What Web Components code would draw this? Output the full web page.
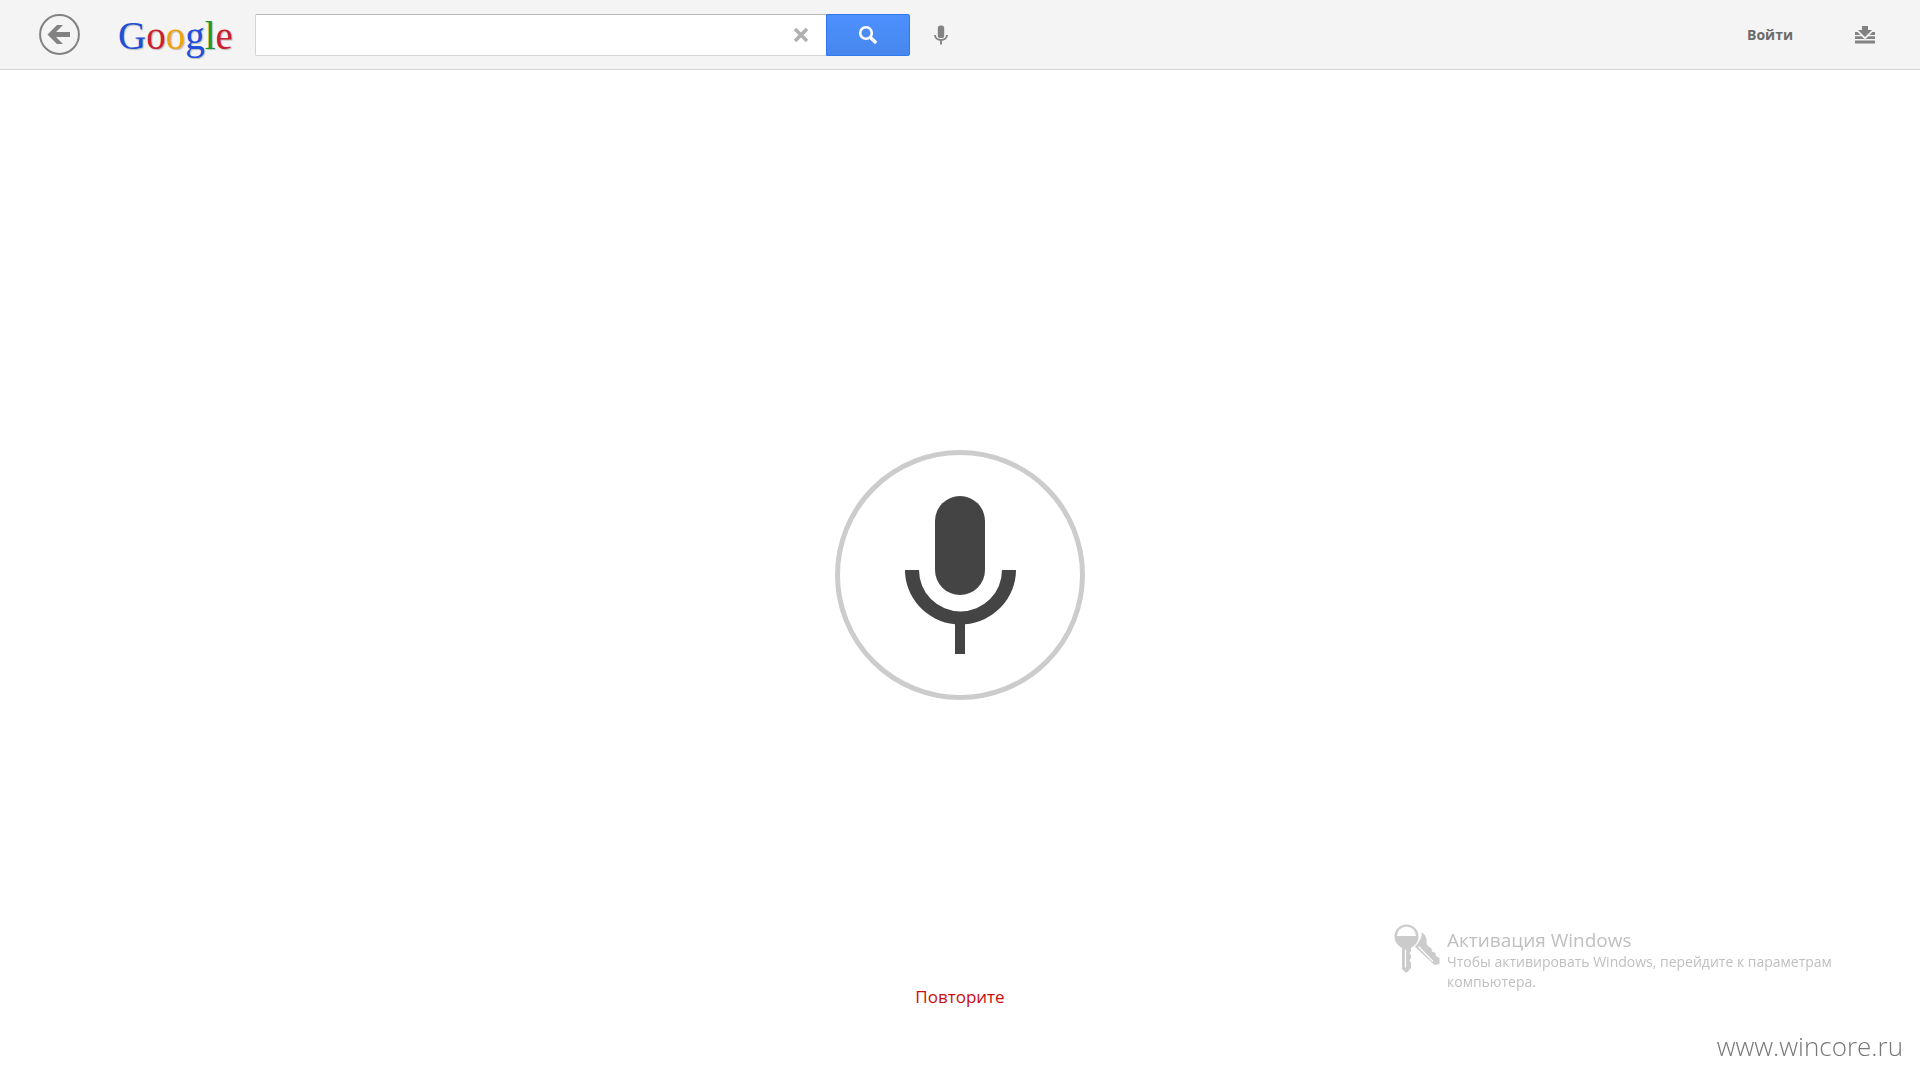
<!DOCTYPE html>
<html lang="ru">
<head>
<meta charset="utf-8">
<title>Google</title>
<style>
  html, body {
    height: 100%;
    margin: 0;
  }

  body {
    font-family: "Open Sans", "Noto Sans", sans-serif;
    background: #fff;
  }
</style>
</head>
<body>
<voice-app></voice-app>

<script>
(function () {
  function define(name, html) {
    const template = document.createElement('template')
    template.innerHTML = html
    customElements.define(name, class extends HTMLElement {
      constructor() {
        super()
        this.attachShadow({ mode: 'open' })
        this.shadowRoot.appendChild(template.content.cloneNode(true))
      }
    })
  }

  define('icon-button', `
    <style>
      :host {
        display: block;
      }

      button {
        display: block;
        padding: 0;
        border: 0;
        background: none;
        font: inherit;
        color: inherit;
        cursor: pointer;
      }
    </style>
    <button type="button"><slot></slot></button>
  `)

  define('google-logo', `
    <style>
      :host {
        display: block;
        padding-top: 2px;
        font-family: "Liberation Serif", serif;
        font-size: 39px;
        line-height: 48px;
      }

      a {
        color: #1f4fd8;
        text-decoration: none;
        text-shadow: 1px 1px 1px #bbb;
      }

      .red { color: #c9202f; }
      .yellow { color: #eba310; }
      .green { color: #1a9a2c; }
    </style>
    <a href="#">G<span class="red">o</span><span class="yellow">o</span>g<span class="green">l</span><span class="red">e</span></a>
  `)

  define('search-box', `
    <style>
      :host {
        display: flex;
        height: 42px;
        width: 655px;
      }

      .field {
        box-sizing: border-box;
        display: flex;
        flex: 1;
        align-items: center;
        padding: 0 17px 0 12px;
        border: 1px solid #d4d4d4;
        border-top-color: #b8b8b8;
        border-right: 0;
        border-radius: 2px 0 0 2px;
        background: #fff;
      }

      input {
        flex: 1;
        min-width: 0;
        border: 0;
        outline: 0;
        background: none;
        font: inherit;
        font-size: 17px;
      }

      .submit {
        display: grid;
        place-items: center;
        width: 84px;
        padding: 0;
        border: 1px solid #3079ed;
        border-radius: 0 2px 2px 0;
        background: linear-gradient(#4d90fe, #4787ed);
        cursor: pointer;
      }

      svg {
        display: block;
      }
    </style>
    <div class="field">
      <input type="text" aria-label="Поиск">
      <icon-button>
        <svg width="16" height="16" viewBox="0 0 16 16" role="img" aria-label="Очистить">
          <path d="M2 2l12 12M14 2L2 14" stroke="#b0b0b0" stroke-width="3.6"/>
        </svg>
      </icon-button>
    </div>
    <button class="submit" type="submit" aria-label="Найти">
      <svg width="20" height="20" viewBox="0 0 20 20" fill="none" stroke="#fff">
        <circle cx="8" cy="8" r="5.8" stroke-width="2.6"/>
        <path d="M12 12l6.2 6" stroke-width="3.4"/>
      </svg>
    </button>
  `)

  define('top-bar', `
    <style>
      :host {
        box-sizing: border-box;
        display: flex;
        align-items: center;
        height: 70px;
        padding: 0 45px 0 39px;
        border-bottom: 1px solid #d5d5d5;
        background: #f4f4f4;
      }

      google-logo {
        margin-left: 38px;
      }

      search-box {
        margin-left: 22px;
      }

      .mic {
        margin-left: 24px;
      }

      .login {
        margin-left: auto;
        color: #6b6b6b;
        font-size: 14px;
        font-weight: 700;
        line-height: 20px;
        text-decoration: none;
      }

      .tray {
        margin-left: 62px;
      }

      svg {
        display: block;
      }
    </style>
    <icon-button>
      <svg width="41" height="41" viewBox="0 0 41 41" role="img" aria-label="Назад">
        <circle cx="20.5" cy="20.5" r="19.4" fill="none" stroke="#828282" stroke-width="2"/>
        <path d="M8.5 20.5L18 11h6l-7 7h14v5H17l7 7h-6z" fill="#828282"/>
      </svg>
    </icon-button>
    <google-logo></google-logo>
    <search-box></search-box>
    <icon-button class="mic">
      <svg width="14" height="20" viewBox="0 0 14 20" role="img" aria-label="Голосовой поиск">
        <rect x="3.800" y="0.500" width="6.400" height="12.500" rx="2.600" fill="#828282"/>
        <path d="M1 10c0 3 2.500 5 6 5s6-2 6-5M7 15v4.500" fill="none" stroke="#828282" stroke-width="1.900"/>
      </svg>
    </icon-button>
    <a class="login" href="#">Войти</a>
    <icon-button class="tray">
      <svg width="20" height="18" viewBox="0 0 20 18" role="img" aria-label="Загрузки" fill="#828282">
        <path d="M7 0h6v4h4l-7 7-7-7h4z"/>
        <path d="M0 6h2.500l3 3H0zM20 6h-2.500l-3 3H20zM0 10.200h6.500L10 13.500l3.500-3.300H20V13H0zM0 14.500h20v3H0z"/>
      </svg>
    </icon-button>
  `)

  define('voice-button', `
    <style>
      :host {
        display: block;
      }

      button {
        display: grid;
        place-items: center;
        width: 250px;
        height: 250px;
        padding: 0;
        border: 5px solid #ccc;
        border-radius: 50%;
        background: #fff;
        cursor: pointer;
      }
    </style>
    <button type="button" aria-label="Говорите">
      <svg width="112" height="158" viewBox="0 0 112 158" fill="#444">
        <rect x="31" y="0" width="50" height="99" rx="25"/>
        <path d="M1 74h14a41.500 41.500 0 0 0 83 0h14a55.500 54.500 0 0 1-51 54.200V158H51v-29.800A55.500 54.500 0 0 1 1 74z"/>
      </svg>
    </button>
  `)

  define('activation-notice', `
    <style>
      :host {
        display: flex;
        gap: 6px;
        width: 460px;
        color: #bfbfbf;
      }

      svg {
        flex: none;
      }

      .text {
        padding-top: 4px;
      }

      h2, p {
        margin: 0;
        font-weight: 400;
      }

      h2 {
        font-size: 19px;
        line-height: 24px;
      }

      p {
        font-size: 14px;
        line-height: 20px;
      }
    </style>
    <svg width="47" height="50" viewBox="0 0 47 50" fill="#cbcbcb">
      <path d="M27.500 8c4 3 5.800 6.500 5 11l1 2.500 4 3 .5 3 3.500 1.500.5 3 3.500 2v6l-5 1L18.500 20.500c6-1 10-6 9-12.500z"/>
      <path d="M24.500 22.500l14.500 15" stroke="#fff" stroke-width="1.200"/>
      <circle cx="12.500" cy="12" r="13.500" fill="#fff"/>
      <circle cx="12.500" cy="12.500" r="12"/>
      <path d="M3 12a9.500 9.500 0 0 1 19 0z" fill="#fff"/>
      <path d="M8 23h9v4l-1.500 2 1.500 2v3l-1.500 2 1.500 3v5l-4 4.500h-1.500L8 45z"/>
      <path d="M11.500 25.500v18" stroke="#fff" stroke-width="1.200"/>
    </svg>
    <div class="text">
      <h2><slot name="title"></slot></h2>
      <p><slot></slot></p>
    </div>
  `)

  define('voice-app', `
    <style>
      :host {
        display: flex;
        flex-direction: column;
        min-height: 100%;
      }

      main {
        flex: 1;
        display: grid;
        grid-template-rows: 1fr auto 1fr;
        justify-items: center;
      }

      voice-button {
        grid-row: 2;
      }

      .retry {
        grid-row: 3;
        align-self: end;
        margin-bottom: 71px;
        color: #c80c0c;
        font-size: 17px;
        line-height: 24px;
        text-decoration: none;
      }

      /* system watermarks float over the page */
      activation-notice {
        position: fixed;
        right: 66px;
        bottom: 88px;
      }

      .site {
        position: fixed;
        right: 17px;
        bottom: 15px;
        color: #777;
        font-size: 26px;
        font-weight: 300;
        line-height: 38px;
      }
    </style>
    <top-bar></top-bar>
    <main>
      <voice-button></voice-button>
      <a class="retry" href="#">Повторите</a>
    </main>
    <activation-notice>
      <span slot="title">Активация Windows</span>
      Чтобы активировать Windows, перейдите к параметрам компьютера.
    </activation-notice>
    <div class="site">www.wincore.ru</div>
  `)

  // the app fills the window even when its content is short
  document.body.style.display = 'grid'
})()
</script>
</body>
</html>
